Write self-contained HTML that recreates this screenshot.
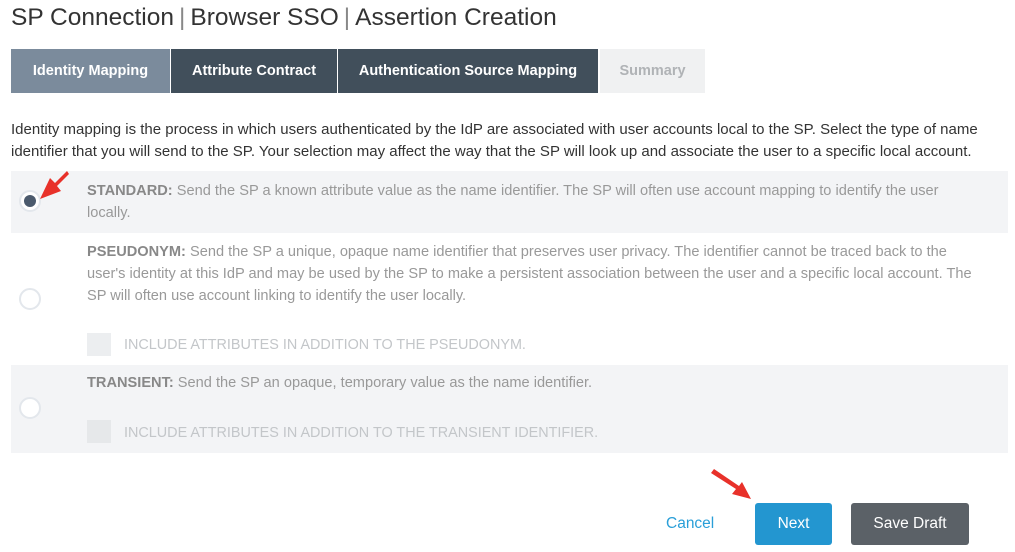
<!DOCTYPE html>
<html><head><style>
body{margin:0;width:1015px;height:552px;background:#fff;font-family:"Liberation Sans",sans-serif;position:relative;overflow:hidden}
.a{position:absolute;white-space:nowrap}
h1{position:absolute;left:11px;top:4px;margin:0;font-weight:normal;font-size:24.5px;color:#333}
h1 span{color:#888;margin:0 5px}
.tab{position:absolute;top:49px;height:44px;line-height:44px;text-align:center;color:#fff;font-weight:bold;font-size:14.5px}
.desc{position:absolute;left:11px;top:119px;font-size:15px;line-height:22px;color:#333;width:1000px}
.blk{position:absolute;left:11px;width:997px}
.t{position:absolute;left:87px;font-size:14.6px;line-height:22px;color:#999;width:892px}
.t b{color:#888}
.rad{position:absolute;left:19px;width:22px;height:22px;border-radius:50%;background:#fff;border:2px solid #e3e7ec;box-sizing:border-box}
.cb{position:absolute;left:87px;width:24px;height:23px;background:#eceef0}
.ci{position:absolute;left:124px;font-size:14.4px;color:#c3c6c9}
.btn{position:absolute;top:503px;height:42px;line-height:42px;text-align:center;color:#fff;font-size:15.5px;border-radius:3px}
</style></head><body>
<h1>SP Connection<span>|</span>Browser SSO<span>|</span>Assertion Creation</h1>
<div class="tab" style="left:11px;width:159px;background:#7b8b9c">Identity Mapping</div>
<div class="tab" style="left:171px;width:166px;background:#414f5b">Attribute Contract</div>
<div class="tab" style="left:338px;width:260px;background:#414f5b">Authentication Source Mapping</div>
<div class="tab" style="left:600px;width:105px;background:#f0f1f2;color:#b0b3b6">Summary</div>
<div class="desc">Identity mapping is the process in which users authenticated by the IdP are associated with user accounts local to the SP. Select the type of name identifier that you will send to the SP. Your selection may affect the way that the SP will look up and associate the user to a specific local account.</div>
<div class="blk" style="top:171px;height:62px;background:#f3f4f6"></div>
<div class="blk" style="top:365px;height:88px;background:#f3f4f6"></div>
<div class="t" style="top:180px"><b>STANDARD:</b> Send the SP a known attribute value as the name identifier. The SP will often use account mapping to identify the user locally.</div>
<div class="rad" style="top:190px"></div>
<div style="position:absolute;left:24px;top:195px;width:12px;height:12px;border-radius:50%;background:#4b5a6d"></div>
<div class="t" style="top:241px"><b>PSEUDONYM:</b> Send the SP a unique, opaque name identifier that preserves user privacy. The identifier cannot be traced back to the user's identity at this IdP and may be used by the SP to make a persistent association between the user and a specific local account. The SP will often use account linking to identify the user locally.</div>
<div class="rad" style="top:288px"></div>
<div class="cb" style="top:333px"></div>
<div class="ci" style="top:337px">INCLUDE ATTRIBUTES IN ADDITION TO THE PSEUDONYM.</div>
<div class="t" style="top:372px"><b>TRANSIENT:</b> Send the SP an opaque, temporary value as the name identifier.</div>
<div class="rad" style="top:397px"></div>
<div class="cb" style="top:420px;background:#e6e8ea"></div>
<div class="ci" style="top:425px">INCLUDE ATTRIBUTES IN ADDITION TO THE TRANSIENT IDENTIFIER.</div>
<div class="a" style="left:666px;top:515px;font-size:15.5px;color:#2a9fd8">Cancel</div>
<div class="btn" style="left:755px;width:77px;background:#2396d0">Next</div>
<div class="btn" style="left:851px;width:118px;background:#5b6167">Save Draft</div>
<svg class="a" style="left:0;top:0" width="1015" height="552">
<path d="M67 171 L55 183 L50 178 L40 199 L61 191 L57 186 L69 174 Z" fill="#e8312a"/>
<path d="M711 473 L736 489 L732 494 L751 499 L742 482 L739 486 L714 469 Z" fill="#e8312a"/>
</svg>
</body></html>
